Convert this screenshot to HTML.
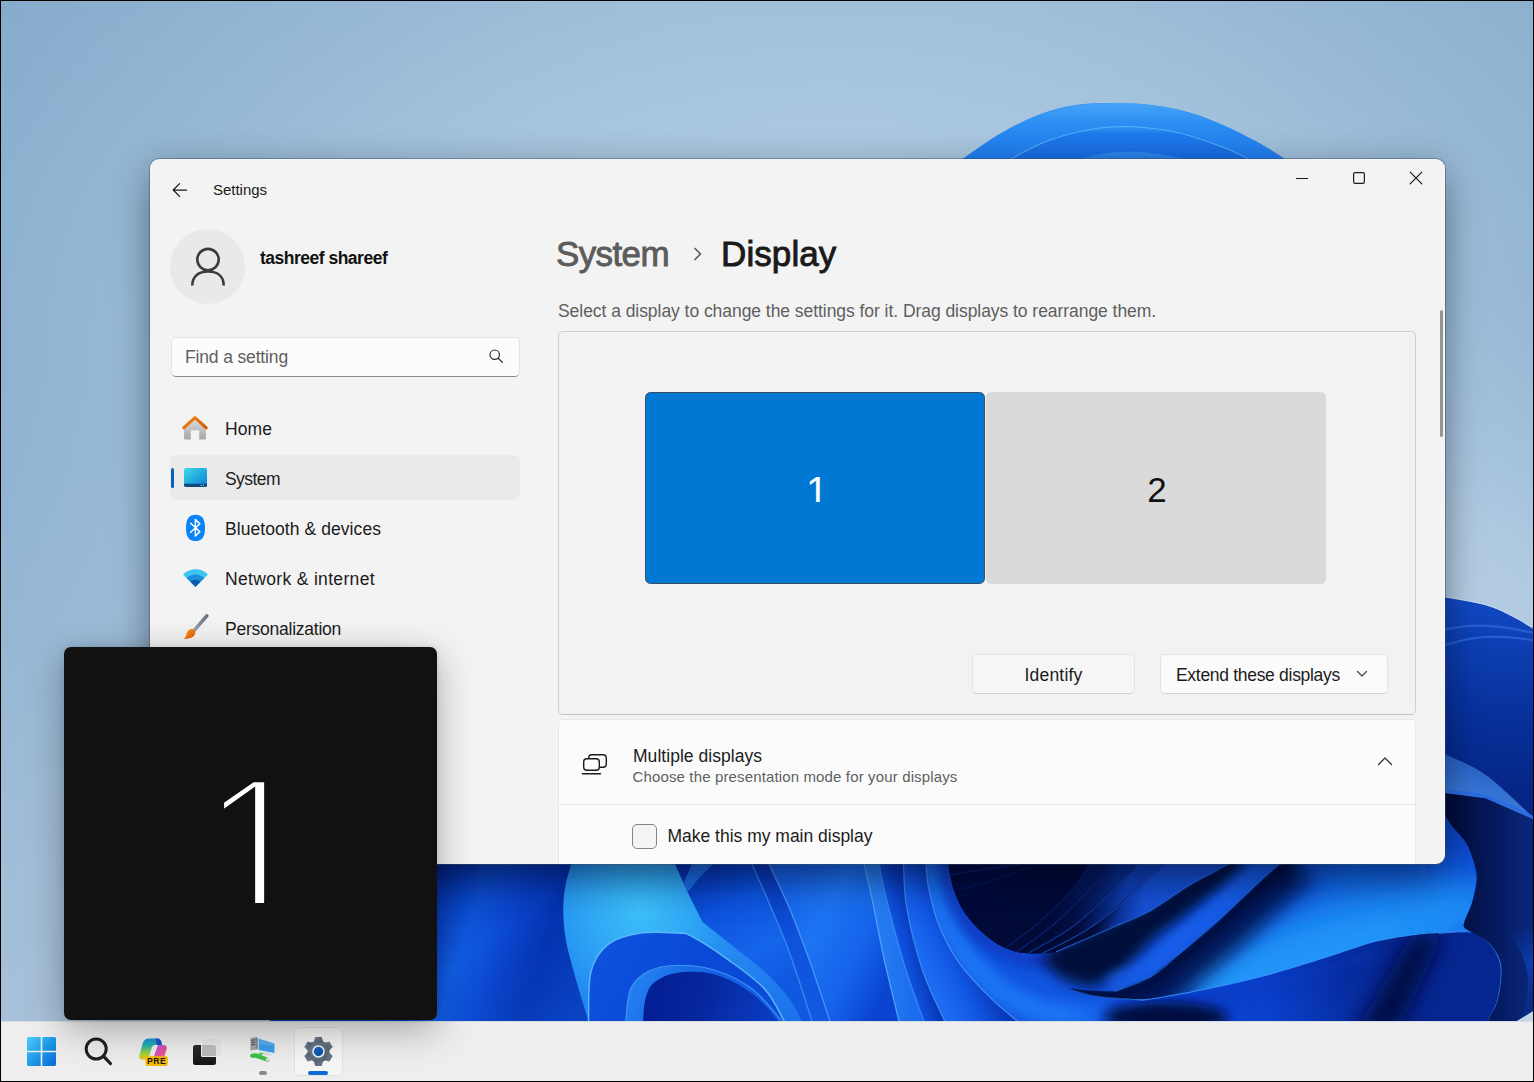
<!DOCTYPE html>
<html lang="en">
<head>
<meta charset="utf-8">
<title>Settings - Display</title>
<style>
*{box-sizing:border-box;margin:0;padding:0}
html,body{width:1534px;height:1082px;overflow:hidden;background:#8fb2d0}
body{font-family:"Liberation Sans","DejaVu Sans",sans-serif;color:#1b1b1b;position:relative}
#wall{position:absolute;left:0;top:0;width:1534px;height:1082px}
#frame{position:absolute;left:0;top:0;width:1534px;height:1082px;border:1px solid #000;z-index:50;pointer-events:none}
.abs{position:absolute}
/* ---------- window ---------- */
#win{position:absolute;left:150px;top:158.600px;width:1295px;height:705.400px;background:#f3f3f3;border-radius:9px;overflow:hidden;
 box-shadow:0 0 0 1px rgba(60,80,105,.45),0 16px 40px rgba(0,0,20,.26),0 0 30px 2px rgba(0,0,10,.10),0 26px 30px -12px rgba(0,0,25,.25)}
#win .t{position:absolute;white-space:nowrap;line-height:1}
/* ---------- taskbar ---------- */
#task{position:absolute;left:0;top:1021px;width:1534px;height:61px;background:#eeeeee;box-shadow:inset 0 1px 0 #d9dde3}
/* ---------- identify flyout ---------- */
#ident{position:absolute;left:64px;top:647px;width:373px;height:373px;background:#111111;border-radius:7px;
 box-shadow:0 10px 38px rgba(0,0,0,.30),0 0 6px rgba(0,0,0,.10)}
#ident span{position:absolute;left:0;width:373px;text-align:center;color:#fff;font-family:"Liberation Sans","DejaVu Sans",sans-serif;line-height:1;-webkit-text-stroke:8.700px #111111}
</style>
</head>
<body>
<!--WALL-START--><svg id="wall" width="1534" height="1082" viewBox="0 0 1534 1082"><defs><radialGradient id="bg" gradientUnits="userSpaceOnUse" cx="830" cy="420" r="1050"><stop offset="0" stop-color="#bdd6ea"/><stop offset="0.4" stop-color="#aac7e0"/><stop offset="0.78" stop-color="#8fb3d1"/><stop offset="1" stop-color="#80a7c7"/></radialGradient><linearGradient id="bgl" gradientUnits="userSpaceOnUse" x1="0" y1="0" x2="0" y2="1082"><stop offset="0" stop-color="#7fa6c6" stop-opacity="0.22"/><stop offset="0.35" stop-color="#9fbddb" stop-opacity="0"/><stop offset="0.75" stop-color="#b6cae0" stop-opacity="0.5"/><stop offset="1" stop-color="#bacde2" stop-opacity="0.72"/></linearGradient><radialGradient id="bgg" gradientUnits="userSpaceOnUse" cx="1420" cy="760" r="470"><stop offset="0" stop-color="#c6d9ea" stop-opacity="0.85"/><stop offset="0.5" stop-color="#bcd2e6" stop-opacity="0.6"/><stop offset="1" stop-color="#a9c6df" stop-opacity="0"/></radialGradient><linearGradient id="base" gradientUnits="userSpaceOnUse" x1="0" y1="100" x2="0" y2="1021"><stop offset="0" stop-color="#2f8df2"/><stop offset="0.25" stop-color="#0f4ed0"/><stop offset="0.6" stop-color="#0a3cb4"/><stop offset="1" stop-color="#0a40c4"/></linearGradient><linearGradient id="arc1" gradientUnits="userSpaceOnUse" x1="0" y1="103" x2="0" y2="165"><stop offset="0" stop-color="#45a4f7"/><stop offset="0.35" stop-color="#2b8cf2"/><stop offset="1" stop-color="#1e7aee"/></linearGradient><linearGradient id="arc2" gradientUnits="userSpaceOnUse" x1="0" y1="125" x2="0" y2="170"><stop offset="0" stop-color="#3a9cf5"/><stop offset="0.2" stop-color="#1f7bec"/><stop offset="1" stop-color="#1462de"/></linearGradient><linearGradient id="arc3" gradientUnits="userSpaceOnUse" x1="0" y1="150" x2="0" y2="175"><stop offset="0" stop-color="#2f8ff2"/><stop offset="1" stop-color="#0f58d8"/></linearGradient><filter id="bl3" filterUnits="userSpaceOnUse" x="300" y="700" width="1300" height="400"><feGaussianBlur stdDeviation="3"/></filter><filter id="bl6" filterUnits="userSpaceOnUse" x="300" y="700" width="1300" height="400"><feGaussianBlur stdDeviation="6"/></filter><filter id="bl10" filterUnits="userSpaceOnUse" x="300" y="700" width="1300" height="400"><feGaussianBlur stdDeviation="10"/></filter><filter id="bl16" filterUnits="userSpaceOnUse" x="300" y="700" width="1300" height="400"><feGaussianBlur stdDeviation="16"/></filter><linearGradient id="b1" gradientUnits="userSpaceOnUse" x1="437" y1="905" x2="575" y2="949"><stop offset="0" stop-color="#0a4cd4"/><stop offset="0.25" stop-color="#125fe8"/><stop offset="0.55" stop-color="#0a44cc"/><stop offset="0.8" stop-color="#0433b0"/><stop offset="1" stop-color="#0536b6"/></linearGradient><linearGradient id="b1d" gradientUnits="userSpaceOnUse" x1="450" y1="864" x2="560" y2="1021"><stop offset="0" stop-color="#021f8a" stop-opacity="0.6"/><stop offset="0.45" stop-color="#02279a" stop-opacity="0"/><stop offset="1" stop-color="#1d74f2" stop-opacity="0.2"/></linearGradient><linearGradient id="b2" gradientUnits="userSpaceOnUse" x1="690" y1="864" x2="760" y2="1000"><stop offset="0" stop-color="#0432ae"/><stop offset="0.35" stop-color="#0d52dc"/><stop offset="0.7" stop-color="#1565ea"/><stop offset="1" stop-color="#0f58e0"/></linearGradient><linearGradient id="p12" gradientUnits="userSpaceOnUse" x1="752" y1="864" x2="800" y2="1021"><stop offset="0" stop-color="#0837b8"/><stop offset="0.5" stop-color="#0f52dc"/><stop offset="1" stop-color="#1259e2"/></linearGradient><linearGradient id="p23" gradientUnits="userSpaceOnUse" x1="780" y1="900" x2="900" y2="960"><stop offset="0" stop-color="#1764ea"/><stop offset="0.35" stop-color="#1d74f2"/><stop offset="0.7" stop-color="#1563ea"/><stop offset="1" stop-color="#0a44d0"/></linearGradient><linearGradient id="p34" gradientUnits="userSpaceOnUse" x1="864" y1="0" x2="925" y2="0"><stop offset="0" stop-color="#2b82f4"/><stop offset="1" stop-color="#1868ec"/></linearGradient><linearGradient id="s1" gradientUnits="userSpaceOnUse" x1="880" y1="940" x2="915" y2="930"><stop offset="0" stop-color="#1a6af0"/><stop offset="0.5" stop-color="#0f52de"/><stop offset="1" stop-color="#0838ba"/></linearGradient><linearGradient id="s2" gradientUnits="userSpaceOnUse" x1="915" y1="950" x2="965" y2="925"><stop offset="0" stop-color="#1c6cf2"/><stop offset="0.45" stop-color="#1258e4"/><stop offset="1" stop-color="#0634b4"/></linearGradient><clipPath id="cPA"><path d="M925.4,848.3C925.5,850.9 925.4,857.5 926.0,864.3C926.5,871.1 926.8,879.3 928.9,889.3C931.0,899.4 933.8,912.5 938.7,924.5C943.6,936.6 949.8,949.6 958.2,961.7C966.7,973.8 979.7,987.1 989.5,996.9C999.3,1006.8 1009.1,1014.2 1016.9,1020.8C1024.7,1027.3 1033.2,1033.5 1036.5,1036.0L1000,1100L1560,1100L1560,820L947.5,848.3Z"/></clipPath><filter id="bl7" filterUnits="userSpaceOnUse" x="300" y="700" width="1300" height="400"><feGaussianBlur stdDeviation="7"/></filter><clipPath id="cPB"><path d="M1065.8,987.5C1070.7,989.0 1083.7,994.2 1095.1,996.3C1106.5,998.4 1125.1,999.4 1134.3,1000.0C1143.4,1000.6 1137.6,1001.7 1150.0,999.8C1162.4,998.0 1189.1,993.2 1208.7,989.1C1228.2,985.0 1247.8,980.6 1267.3,975.4C1286.9,970.2 1308.1,963.3 1326.0,957.8C1344.0,952.2 1360.2,945.9 1374.9,942.1C1389.6,938.4 1403.4,936.8 1414.0,935.3C1424.7,933.8 1429.4,933.7 1438.9,933.1C1448.4,932.5 1465.7,932.0 1471.1,931.8L1471.0,932.0L1464.0,927.0L1465.0,920.0L1472.0,903.0L1476.7,880.0L1474.0,863.0L1466.3,843.5L1453.4,828.0L1445.0,816.0L1438.0,806.0L1425.0,795.0L1300,795L1290.8,854.1L1279.1,864.3L1257.6,883.5L1218.5,920.6L1179.3,953.9L1150.0,977.3L1114.7,991.4L1085.4,990.6L1065.8,987.5Z"/></clipPath><linearGradient id="pb" gradientUnits="userSpaceOnUse" x1="1200" y1="900" x2="1420" y2="1010"><stop offset="0" stop-color="#0a40c8"/><stop offset="0.5" stop-color="#1266e6"/><stop offset="1" stop-color="#0f55dc"/></linearGradient><linearGradient id="e1s" gradientUnits="userSpaceOnUse" x1="1060" y1="0" x2="1160" y2="0"><stop offset="0" stop-color="#3a92f7" stop-opacity="0"/><stop offset="1" stop-color="#3a92f7" stop-opacity="1"/></linearGradient><clipPath id="cUN"><path d="M1065.8,987.5C1070.7,989.0 1083.7,994.2 1095.1,996.3C1106.5,998.4 1125.1,999.4 1134.3,1000.0C1143.4,1000.6 1137.6,1001.7 1150.0,999.8C1162.4,998.0 1189.1,993.2 1208.7,989.1C1228.2,985.0 1247.8,980.6 1267.3,975.4C1286.9,970.2 1308.1,963.3 1326.0,957.8C1344.0,952.2 1360.2,945.9 1374.9,942.1C1389.6,938.4 1403.4,936.8 1414.0,935.3C1424.7,933.8 1429.4,933.7 1438.9,933.1C1448.4,932.5 1462.8,930.4 1471.1,931.8C1479.3,933.3 1483.5,936.4 1488.4,941.7C1493.4,947.1 1499.1,954.5 1500.8,964.0C1502.4,973.5 1498.7,992.9 1498.3,998.7L1500,1100L1000,1100Z"/></clipPath><linearGradient id="mUNg" gradientUnits="userSpaceOnUse" x1="1066" y1="0" x2="1120" y2="0"><stop offset="0" stop-color="#fff" stop-opacity="0"/><stop offset="1" stop-color="#fff" stop-opacity="1"/></linearGradient><mask id="mUN" maskUnits="userSpaceOnUse" x="900" y="800" width="700" height="300"><rect x="900" y="800" width="700" height="300" fill="url(#mUNg)"/></mask><linearGradient id="und" gradientUnits="userSpaceOnUse" x1="1060" y1="1030" x2="1400" y2="960"><stop offset="0" stop-color="#1660ea"/><stop offset="0.3" stop-color="#0a44d4"/><stop offset="0.6" stop-color="#0a40cc"/><stop offset="0.85" stop-color="#062c9e"/><stop offset="1" stop-color="#052690"/></linearGradient><linearGradient id="cav" gradientUnits="userSpaceOnUse" x1="950" y1="864" x2="1200" y2="960"><stop offset="0" stop-color="#040c44"/><stop offset="0.5" stop-color="#030a3a"/><stop offset="1" stop-color="#02082e"/></linearGradient><clipPath id="cCV"><path d="M947.5,848.3C947.6,850.9 947.6,858.1 948.5,864.3C949.3,870.5 950.1,878.0 952.4,885.4C954.6,892.9 957.9,901.7 962.1,908.9C966.4,916.1 971.9,922.6 977.8,928.5C983.7,934.3 990.8,940.2 997.3,944.1C1003.9,948.0 1010.4,950.4 1016.9,951.9C1023.4,953.5 1033.2,953.2 1036.5,953.5L1056.0,951.9L1114.7,926.5L1150.0,910.9L1189.1,885.4L1228.2,864.3L1240.0,856.1L900,800Z"/></clipPath><linearGradient id="rg0" gradientUnits="userSpaceOnUse" x1="1036.4639155094856" y1="924.5413651476629" x2="1064.0219049481714" y2="934.5855662037942"><stop offset="0" stop-color="#020a36"/><stop offset="0.55" stop-color="#04144f"/><stop offset="1" stop-color="#07206f"/></linearGradient><linearGradient id="rg1" gradientUnits="userSpaceOnUse" x1="1056.0219049481714" y1="922.5855662037942" x2="1083.579894386857" y2="936.5413651476629"><stop offset="0" stop-color="#020a36"/><stop offset="0.55" stop-color="#07206f"/><stop offset="1" stop-color="#0b3096"/></linearGradient><linearGradient id="rg2" gradientUnits="userSpaceOnUse" x1="1075.579894386857" y1="924.5413651476629" x2="1103.1378838255428" y2="936.5413651476629"><stop offset="0" stop-color="#020a36"/><stop offset="0.55" stop-color="#0b3096"/><stop offset="1" stop-color="#1142bc"/></linearGradient><linearGradient id="rg3" gradientUnits="userSpaceOnUse" x1="1095.1378838255428" y1="924.5413651476629" x2="1122.6958732642283" y2="938.4971640915314"><stop offset="0" stop-color="#020a36"/><stop offset="0.55" stop-color="#1142bc"/><stop offset="1" stop-color="#1650d4"/></linearGradient><radialGradient id="rfade" gradientUnits="userSpaceOnUse" cx="1028.6407197340113" cy="951.9225503618228" r="125"><stop offset="0" stop-color="#020a36" stop-opacity="0.95"/><stop offset="0.5" stop-color="#020a36" stop-opacity="0.6"/><stop offset="1" stop-color="#020a36" stop-opacity="0"/></radialGradient><linearGradient id="curl" gradientUnits="userSpaceOnUse" x1="1440" y1="940" x2="1500" y2="1021"><stop offset="0" stop-color="#0a36aa"/><stop offset="1" stop-color="#0d44c4"/></linearGradient><radialGradient id="lp" gradientUnits="userSpaceOnUse" cx="640" cy="912" r="160"><stop offset="0" stop-color="#3cc0f8"/><stop offset="0.3" stop-color="#30a8f5"/><stop offset="0.65" stop-color="#2088f0"/><stop offset="1" stop-color="#176ce8"/></radialGradient><linearGradient id="rim" gradientUnits="userSpaceOnUse" x1="700" y1="930" x2="800" y2="1021"><stop offset="0" stop-color="#2a90f2" stop-opacity="0"/><stop offset="0.4" stop-color="#2484f0" stop-opacity="0.9"/><stop offset="1" stop-color="#1c70ec" stop-opacity="1"/></linearGradient><linearGradient id="inf" gradientUnits="userSpaceOnUse" x1="600" y1="930" x2="760" y2="1021"><stop offset="0" stop-color="#0d52de"/><stop offset="0.6" stop-color="#0a48d6"/><stop offset="1" stop-color="#0b4cd8"/></linearGradient><linearGradient id="lip" gradientUnits="userSpaceOnUse" x1="630" y1="960" x2="700" y2="1000"><stop offset="0" stop-color="#2686f2"/><stop offset="1" stop-color="#1460e4"/></linearGradient><linearGradient id="ind" gradientUnits="userSpaceOnUse" x1="640" y1="980" x2="770" y2="1010"><stop offset="0" stop-color="#041c92"/><stop offset="0.5" stop-color="#06279e"/><stop offset="1" stop-color="#0a3cc0"/></linearGradient><linearGradient id="tr" gradientUnits="userSpaceOnUse" x1="1450" y1="0" x2="1540" y2="0"><stop offset="0" stop-color="#030d3a"/><stop offset="0.5" stop-color="#051a5e"/><stop offset="1" stop-color="#0a2a80"/></linearGradient><linearGradient id="trs" gradientUnits="userSpaceOnUse" x1="1490" y1="940" x2="1534" y2="1010"><stop offset="0" stop-color="#0a2f9a" stop-opacity="0"/><stop offset="0.5" stop-color="#0d3fb4" stop-opacity="0.9"/><stop offset="1" stop-color="#0a2f9a" stop-opacity="0.3"/></linearGradient><linearGradient id="tl" gradientUnits="userSpaceOnUse" x1="1445" y1="810" x2="1445" y2="880"><stop offset="0" stop-color="#0a3cb4" stop-opacity="1"/><stop offset="0.55" stop-color="#0d48c8" stop-opacity="0.9"/><stop offset="1" stop-color="#0f52d6" stop-opacity="0"/></linearGradient><linearGradient id="r1" gradientUnits="userSpaceOnUse" x1="1445" y1="600" x2="1445" y2="800"><stop offset="0" stop-color="#1149c2"/><stop offset="0.15" stop-color="#0e42b8"/><stop offset="0.6" stop-color="#08309a"/><stop offset="1" stop-color="#062584"/></linearGradient><linearGradient id="r2" gradientUnits="userSpaceOnUse" x1="1460" y1="760" x2="1450" y2="800"><stop offset="0" stop-color="#2a62c4"/><stop offset="0.6" stop-color="#3573d2"/><stop offset="1" stop-color="#3a7ad8"/></linearGradient></defs><rect width="1534" height="1082" fill="url(#bg)"/>
<rect width="1534" height="1082" fill="url(#bgl)"/>
<rect width="1534" height="1082" fill="url(#bgg)"/>
<path d="M964.0,158.0C971.7,153.0 994.0,136.3 1010.0,128.0C1026.0,119.7 1042.5,112.2 1060.0,108.0C1077.5,103.8 1095.0,102.7 1115.0,103.0C1135.0,103.3 1159.2,105.0 1180.0,110.0C1200.8,115.0 1220.0,123.0 1240.0,133.0C1260.0,143.0 1276.7,152.2 1300.0,170.0C1323.3,187.8 1356.7,198.3 1380.0,240.0C1403.3,281.7 1429.2,359.3 1440.0,420.0C1450.8,480.7 1437.3,572.0 1445.0,604.0C1452.7,636.0 1474.8,608.8 1486.0,612.0C1497.2,615.2 1499.7,616.7 1512.0,623.0C1524.3,629.3 1545.3,620.5 1560.0,650.0C1574.7,679.5 1604.3,741.7 1600.0,800.0C1595.7,858.3 1550.7,961.7 1534.0,1000.0C1517.3,1038.3 1555.7,1013.3 1500.0,1030.0C1444.3,1046.7 1350.0,1088.3 1200.0,1100.0C1050.0,1111.7 750.0,1110.0 600.0,1100.0C450.0,1090.0 358.3,1073.3 300.0,1040.0C241.7,1006.7 233.3,990.0 250.0,900.0C266.7,810.0 325.0,608.3 400.0,500.0C475.0,391.7 606.0,307.0 700.0,250.0C794.0,193.0 920.0,173.3 964.0,158.0Z" fill="url(#base)"/>
<path d="M955.0,165.0C962.5,159.8 983.3,143.2 1000.0,134.0C1016.7,124.8 1035.8,115.2 1055.0,110.0C1074.2,104.8 1095.0,103.2 1115.0,103.0C1135.0,102.8 1155.0,104.3 1175.0,109.0C1195.0,113.7 1215.8,121.8 1235.0,131.0C1254.2,140.2 1280.8,158.5 1290.0,164.0L1290,300L955,300Z" fill="url(#arc1)"/>
<path d="M1000.0,165.0C1008.3,160.8 1031.7,146.3 1050.0,140.0C1068.3,133.7 1090.0,128.5 1110.0,127.0C1130.0,125.5 1150.8,127.5 1170.0,131.0C1189.2,134.5 1209.7,142.2 1225.0,148.0C1240.3,153.8 1255.8,163.0 1262.0,166.0L1262,300L1000,300Z" fill="url(#arc2)"/>
<path d="M1000.0,165.0C1008.3,160.8 1031.7,146.3 1050.0,140.0C1068.3,133.7 1090.0,128.5 1110.0,127.0C1130.0,125.5 1150.8,127.5 1170.0,131.0C1189.2,134.5 1209.7,142.2 1225.0,148.0C1240.3,153.8 1255.8,163.0 1262.0,166.0" fill="none" stroke="#5cb8fa" stroke-width="1.2" opacity="0.8"/>
<path d="M1060.0,166.0C1066.7,164.0 1086.7,156.3 1100.0,154.0C1113.3,151.7 1126.7,151.3 1140.0,152.0C1153.3,152.7 1169.2,155.5 1180.0,158.0C1190.8,160.5 1200.8,165.5 1205.0,167.0L1205,300L1060,300Z" fill="url(#arc3)"/>
<path d="M380,840L1560,840L1560,1050L380,1050Z" fill="#0c4cd8"/>
<path d="M380,840L700,840L700,1040L380,1040Z" fill="url(#b1)"/>
<path d="M380,840L700,840L700,1040L380,1040Z" fill="url(#b1d)"/>
<path d="M660,840L900,840L900,1050L660,1050Z" fill="url(#b2)"/>
<path d="M714.9,862.5C712.4,865.0 704.5,872.4 700.0,877.3C695.5,882.3 689.7,889.7 687.6,892.2L683.9,882.3C685.3,879.0 691.1,865.8 692.6,862.5Z" fill="#1c6de6"/>
<path d="M745.0,845.0C746.2,848.2 747.8,854.0 752.0,864.0C756.2,874.0 763.7,890.0 770.0,905.0C776.3,920.0 783.0,934.7 790.0,954.0C797.0,973.3 807.0,1005.8 812.0,1021.0C817.0,1036.2 818.7,1041.0 820.0,1045.0L838.0,1045.0L830.0,1021.0L810.0,962.0L790.0,909.5L769.0,864.0L761.0,845.0Z" fill="url(#p12)"/>
<path d="M745.0,845.0C746.2,848.2 747.8,854.0 752.0,864.0C756.2,874.0 763.7,890.0 770.0,905.0C776.3,920.0 783.0,934.7 790.0,954.0C797.0,973.3 807.0,1005.8 812.0,1021.0C817.0,1036.2 818.7,1041.0 820.0,1045.0" fill="none" stroke="#3f95f6" stroke-width="1.3" opacity="0.8"/>
<path d="M761.0,845.0C762.3,848.2 764.2,853.2 769.0,864.0C773.8,874.8 783.2,893.2 790.0,909.5C796.8,925.8 803.3,943.4 810.0,962.0C816.7,980.6 825.3,1007.2 830.0,1021.0C834.7,1034.8 836.7,1041.0 838.0,1045.0L903.9,1040.8L899.0,1021.0L884.1,959.1L871.7,897.2L864.3,864.5L863.1,847.6Z" fill="url(#p23)"/>
<path d="M761.0,845.0C762.3,848.2 764.2,853.2 769.0,864.0C773.8,874.8 783.2,893.2 790.0,909.5C796.8,925.8 803.3,943.4 810.0,962.0C816.7,980.6 825.3,1007.2 830.0,1021.0C834.7,1034.8 836.7,1041.0 838.0,1045.0" fill="none" stroke="#4a9cf8" stroke-width="1.3" opacity="0.9"/>
<path d="M863.1,847.6C863.3,850.4 862.9,856.2 864.3,864.5C865.8,872.7 868.4,881.4 871.7,897.2C875.0,912.9 879.6,938.4 884.1,959.1C888.7,979.7 895.7,1007.4 899.0,1021.0C902.3,1034.6 903.1,1037.5 903.9,1040.8L930.0,1040.8L923.8,1021.0L906.4,971.5L889.1,909.5L879.2,864.5L877.9,847.6Z" fill="url(#p34)"/>
<path d="M863.1,847.6C863.3,850.4 862.9,856.2 864.3,864.5C865.8,872.7 868.4,881.4 871.7,897.2C875.0,912.9 879.6,938.4 884.1,959.1C888.7,979.7 895.7,1007.4 899.0,1021.0C902.3,1034.6 903.1,1037.5 903.9,1040.8" fill="none" stroke="#55a6fa" stroke-width="1.3" opacity="0.9"/>
<path d="M877.9,847.6C878.1,850.4 877.3,854.1 879.2,864.5C881.0,874.8 884.5,891.7 889.1,909.5C893.6,927.4 900.6,952.9 906.4,971.5C912.2,990.0 919.8,1009.5 923.8,1021.0C927.7,1032.6 928.9,1037.5 930.0,1040.8L954.3,1039.9L944.5,1020.8L925.0,977.3L913.2,938.2L905.4,899.1L903.5,864.3L902.5,848.3Z" fill="url(#s1)"/>
<path d="M877.9,847.6C878.1,850.4 877.3,854.1 879.2,864.5C881.0,874.8 884.5,891.7 889.1,909.5C893.6,927.4 900.6,952.9 906.4,971.5C912.2,990.0 919.8,1009.5 923.8,1021.0C927.7,1032.6 928.9,1037.5 930.0,1040.8" fill="none" stroke="#3c8cf4" stroke-width="1.2" opacity="0.9"/>
<path d="M902.5,848.3C902.7,850.9 903.0,855.8 903.5,864.3C904.0,872.8 903.8,886.8 905.4,899.1C907.1,911.4 910.0,925.2 913.2,938.2C916.5,951.3 919.8,963.6 925.0,977.3C930.2,991.1 939.7,1010.3 944.5,1020.8C949.4,1031.2 952.7,1036.7 954.3,1039.9L1036.5,1036.0L1016.9,1020.8L989.5,996.9L958.2,961.7L938.7,924.5L928.9,889.3L926.0,864.3L925.4,848.3Z" fill="url(#s2)"/>
<path d="M902.5,848.3C902.7,850.9 903.0,855.8 903.5,864.3C904.0,872.8 903.8,886.8 905.4,899.1C907.1,911.4 910.0,925.2 913.2,938.2C916.5,951.3 919.8,963.6 925.0,977.3C930.2,991.1 939.7,1010.3 944.5,1020.8C949.4,1031.2 952.7,1036.7 954.3,1039.9" fill="none" stroke="#3f8ef5" stroke-width="1.2" opacity="0.9"/>
<path d="M925.4,848.3C925.5,850.9 925.4,857.5 926.0,864.3C926.5,871.1 926.8,879.3 928.9,889.3C931.0,899.4 933.8,912.5 938.7,924.5C943.6,936.6 949.8,949.6 958.2,961.7C966.7,973.8 979.7,987.1 989.5,996.9C999.3,1006.8 1009.1,1014.2 1016.9,1020.8C1024.7,1027.3 1033.2,1033.5 1036.5,1036.0L1000,1100L1560,1100L1560,820L947.5,848.3Z" fill="#1156e0"/>
<g clip-path="url(#cPA)">
<path d="M931.2,852.2C931.8,856.7 932.0,868.5 934.4,879.6C936.8,890.6 939.9,905.6 945.5,918.7C951.1,931.7 958.4,945.4 968.0,957.8C977.6,970.2 988.5,983.5 1003.2,993.0C1017.9,1002.4 1035.8,1010.9 1056.0,1014.5C1076.2,1018.1 1113.1,1014.5 1124.5,1014.5" fill="none" stroke="#1f74f4" stroke-width="24" filter="url(#bl6)" opacity="0.95"/>
<path d="M945.5,852.2C946.0,857.4 946.0,873.4 948.5,883.5C950.9,893.6 955.3,904.3 960.2,912.8C965.1,921.3 970.9,928.1 977.8,934.3C984.6,940.5 991.5,945.4 1001.3,950.0C1011.0,954.5 1025.4,959.7 1036.5,961.7C1047.5,963.7 1062.5,961.7 1067.8,961.7" fill="none" stroke="#0a38bc" stroke-width="14" filter="url(#bl6)" opacity="0.9"/>
<path d="M1052.0,945.9C1061.8,941.7 1095.0,927.3 1110.7,920.5C1126.4,913.7 1133.6,911.7 1146.0,904.9C1158.4,898.0 1172.1,887.2 1185.1,879.4C1198.2,871.7 1215.8,863.2 1224.2,858.3C1232.7,853.4 1234.0,851.5 1236.0,850.1L1247.8,860.0L1232.1,877.6L1183.2,916.7L1153.8,938.2L1120.6,974.4L1091.2,988.1L1061.9,979.3L1040.4,957.8Z" fill="#020a36" filter="url(#bl7)" opacity="0.97"/>
<path d="M1273.1,855.3C1269.5,858.5 1261.7,865.1 1251.6,874.5C1241.5,883.9 1225.5,899.9 1212.5,911.6C1199.4,923.4 1184.7,935.4 1173.3,944.9C1161.9,954.3 1154.8,962.1 1144.0,968.3C1133.2,974.6 1114.6,980.1 1108.7,982.4" fill="none" stroke="#1a62ec" stroke-width="14" filter="url(#bl6)" opacity="0.8"/>
</g>
<path d="M925.4,848.3C925.5,850.9 925.4,857.5 926.0,864.3C926.5,871.1 926.8,879.3 928.9,889.3C931.0,899.4 933.8,912.5 938.7,924.5C943.6,936.6 949.8,949.6 958.2,961.7C966.7,973.8 979.7,987.1 989.5,996.9C999.3,1006.8 1009.1,1014.2 1016.9,1020.8C1024.7,1027.3 1033.2,1033.5 1036.5,1036.0" fill="none" stroke="#4794f7" stroke-width="1.3" opacity="0.85"/>
<path d="M1065.8,987.5C1070.7,989.0 1083.7,994.2 1095.1,996.3C1106.5,998.4 1125.1,999.4 1134.3,1000.0C1143.4,1000.6 1137.6,1001.7 1150.0,999.8C1162.4,998.0 1189.1,993.2 1208.7,989.1C1228.2,985.0 1247.8,980.6 1267.3,975.4C1286.9,970.2 1308.1,963.3 1326.0,957.8C1344.0,952.2 1360.2,945.9 1374.9,942.1C1389.6,938.4 1403.4,936.8 1414.0,935.3C1424.7,933.8 1429.4,933.7 1438.9,933.1C1448.4,932.5 1465.7,932.0 1471.1,931.8L1471.0,932.0L1464.0,927.0L1465.0,920.0L1472.0,903.0L1476.7,880.0L1474.0,863.0L1466.3,843.5L1453.4,828.0L1445.0,816.0L1438.0,806.0L1425.0,795.0L1300,795L1290.8,854.1L1279.1,864.3L1257.6,883.5L1218.5,920.6L1179.3,953.9L1150.0,977.3L1114.7,991.4L1085.4,990.6L1065.8,987.5Z" fill="url(#pb)"/>
<g clip-path="url(#cPB)">
<ellipse cx="1340" cy="946" rx="165" ry="42" transform="rotate(-17 1340 946)" fill="#1e8ef5" filter="url(#bl16)"/>
<ellipse cx="1300" cy="962" rx="110" ry="18" transform="rotate(-17 1300 962)" fill="#2294f7" filter="url(#bl10)"/>
<path d="M1300.8,868.1C1298.9,869.8 1294.6,873.4 1289.1,878.3C1283.5,883.2 1277.7,888.1 1267.6,897.5C1257.5,906.9 1241.5,922.9 1228.5,934.6C1215.4,946.4 1200.7,958.4 1189.3,967.9C1177.9,977.3 1170.8,985.1 1160.0,991.3C1149.2,997.6 1135.5,1003.2 1124.7,1005.4C1113.9,1007.6 1103.5,1005.3 1095.4,1004.6C1087.2,1004.0 1079.1,1002.0 1075.8,1001.5" fill="none" stroke="#020c40" stroke-width="30" filter="url(#bl10)" opacity="0.9"/>
<path d="M1293.8,858.1C1291.9,859.8 1287.6,863.4 1282.1,868.3C1276.5,873.2 1270.7,878.1 1260.6,887.5C1250.5,896.9 1234.5,912.9 1221.5,924.6C1208.4,936.4 1193.7,948.4 1182.3,957.9C1170.9,967.3 1163.8,975.1 1153.0,981.3C1142.2,987.6 1128.5,993.2 1117.7,995.4C1106.9,997.6 1096.5,995.3 1088.4,994.6C1080.2,994.0 1072.1,992.0 1068.8,991.5" fill="none" stroke="#020c40" stroke-width="14" filter="url(#bl3)" opacity="0.95"/>
</g>
<path d="M1065.8,987.5C1070.7,989.0 1083.7,994.2 1095.1,996.3C1106.5,998.4 1125.1,999.4 1134.3,1000.0C1143.4,1000.6 1147.4,999.9 1150.0,999.8" fill="none" stroke="url(#e1s)" stroke-width="2.2" opacity="0.9"/>
<path d="M1150.0,999.8C1159.8,998.0 1189.1,993.2 1208.7,989.1C1228.2,985.0 1247.8,980.6 1267.3,975.4C1286.9,970.2 1308.1,963.3 1326.0,957.8C1344.0,952.2 1360.2,945.9 1374.9,942.1C1389.6,938.4 1403.4,936.8 1414.0,935.3C1424.7,933.8 1429.4,933.7 1438.9,933.1C1448.4,932.5 1462.8,930.4 1471.1,931.8C1479.3,933.3 1485.5,940.1 1488.4,941.7" fill="none" stroke="#3a92f7" stroke-width="2" opacity="0.9"/>
<path d="M1279.1,864.3C1275.5,867.5 1267.7,874.1 1257.6,883.5C1247.5,892.9 1231.5,908.9 1218.5,920.6C1205.4,932.4 1190.7,944.4 1179.3,953.9C1167.9,963.3 1160.8,971.1 1150.0,977.3C1139.2,983.6 1120.6,989.1 1114.7,991.4" fill="none" stroke="#2f80f2" stroke-width="1.2" opacity="0.55"/>
<path d="M1065.8,987.5C1070.7,989.0 1083.7,994.2 1095.1,996.3C1106.5,998.4 1125.1,999.4 1134.3,1000.0C1143.4,1000.6 1137.6,1001.7 1150.0,999.8C1162.4,998.0 1189.1,993.2 1208.7,989.1C1228.2,985.0 1247.8,980.6 1267.3,975.4C1286.9,970.2 1308.1,963.3 1326.0,957.8C1344.0,952.2 1360.2,945.9 1374.9,942.1C1389.6,938.4 1403.4,936.8 1414.0,935.3C1424.7,933.8 1429.4,933.7 1438.9,933.1C1448.4,932.5 1462.8,930.4 1471.1,931.8C1479.3,933.3 1483.5,936.4 1488.4,941.7C1493.4,947.1 1499.1,954.5 1500.8,964.0C1502.4,973.5 1498.7,992.9 1498.3,998.7L1500,1100L1000,1100Z" fill="url(#und)" mask="url(#mUN)"/>
<g clip-path="url(#cUN)">
<path d="M1412.1,934.3 L1443.4,934.3 L1396.4,1036.0 L1353.4,1036.0 Z" fill="#020f46" filter="url(#bl10)"/>
<path d="M1150.0,1009.6C1159.8,1007.8 1189.1,1002.8 1208.7,998.9C1228.2,995.0 1247.8,991.0 1267.3,986.1C1286.9,981.3 1308.1,975.1 1326.0,969.5C1344.0,964.0 1366.8,955.7 1374.9,952.9" fill="none" stroke="#0836b8" stroke-width="10" filter="url(#bl6)" opacity="0.5"/>
<ellipse cx="1166" cy="1017" rx="62" ry="15" fill="#020d40" filter="url(#bl6)"/>
</g>
<path d="M947.5,848.3C947.6,850.9 947.6,858.1 948.5,864.3C949.3,870.5 950.1,878.0 952.4,885.4C954.6,892.9 957.9,901.7 962.1,908.9C966.4,916.1 971.9,922.6 977.8,928.5C983.7,934.3 990.8,940.2 997.3,944.1C1003.9,948.0 1010.4,950.4 1016.9,951.9C1023.4,953.5 1033.2,953.2 1036.5,953.5L1056.0,951.9L1114.7,926.5L1150.0,910.9L1189.1,885.4L1228.2,864.3L1240.0,856.1L900,800Z" fill="url(#cav)"/>
<g clip-path="url(#cCV)">
<path d="M1005.2,948.0C1010.4,944.1 1024.7,935.0 1036.5,924.5C1048.2,914.1 1066.5,896.5 1075.6,885.4C1084.7,874.3 1088.6,862.6 1091.2,858.0L1114.7,858.0L1095.1,883.5L1056.0,922.6L1016.9,951.5Z" fill="url(#rg0)"/>
<path d="M1016.9,951.5C1023.4,946.7 1043.0,933.9 1056.0,922.6C1069.1,911.2 1085.4,894.2 1095.1,883.5C1104.9,872.7 1111.4,862.3 1114.7,858.0L1144.0,858.0L1124.5,879.6L1075.6,924.5L1028.6,952.9Z" fill="url(#rg1)"/>
<path d="M1028.6,952.9C1036.5,948.2 1059.6,936.8 1075.6,924.5C1091.6,912.3 1113.1,890.6 1124.5,879.6C1135.9,868.5 1140.8,861.6 1144.0,858.0L1171.4,858.0L1153.8,875.6L1095.1,924.5L1042.3,953.5Z" fill="url(#rg2)"/>
<path d="M1042.3,953.5C1051.1,948.7 1076.6,937.5 1095.1,924.5C1113.7,911.6 1141.1,886.7 1153.8,875.6C1166.5,864.6 1168.5,861.0 1171.4,858.0L1240.0,856.1L1228.2,864.3L1189.1,885.4L1150.0,910.9L1114.7,926.5L1056.0,951.9Z" fill="url(#rg3)"/>
<path d="M900,820L1300,820L1300,1000L900,1000Z" fill="url(#rfade)"/>
<path d="M1005.2,948.0C1010.4,944.1 1024.7,935.0 1036.5,924.5C1048.2,914.1 1066.5,896.5 1075.6,885.4C1084.7,874.3 1088.6,862.6 1091.2,858.0" fill="none" stroke="#0a2a8a" stroke-width="1.1" opacity="0.6"/>
<path d="M1016.9,951.5C1023.4,946.7 1043.0,933.9 1056.0,922.6C1069.1,911.2 1085.4,894.2 1095.1,883.5C1104.9,872.7 1111.4,862.3 1114.7,858.0" fill="none" stroke="#0f3aae" stroke-width="1.1" opacity="0.6"/>
<path d="M1028.6,952.9C1036.5,948.2 1059.6,936.8 1075.6,924.5C1091.6,912.3 1113.1,890.6 1124.5,879.6C1135.9,868.5 1140.8,861.6 1144.0,858.0" fill="none" stroke="#1850d4" stroke-width="1.1" opacity="0.6"/>
<path d="M1042.3,953.5C1051.1,948.7 1076.6,937.5 1095.1,924.5C1113.7,911.6 1141.1,886.7 1153.8,875.6C1166.5,864.6 1168.5,861.0 1171.4,858.0" fill="none" stroke="#2266e8" stroke-width="1.1" opacity="0.6"/>
<path d="M950.4,874.7C955.6,873.9 970.0,871.5 981.7,869.8C993.4,868.1 1014.3,865.2 1020.8,864.3" fill="none" stroke="#0a2270" stroke-width="2" opacity="0.7"/>
<path d="M958.2,889.3C963.4,888.0 977.8,885.1 989.5,881.5C1001.3,877.9 1022.1,870.1 1028.6,867.8" fill="none" stroke="#081c60" stroke-width="2" opacity="0.6"/>
</g>
<path d="M1056.0,951.9C1065.8,947.7 1099.0,933.3 1114.7,926.5C1130.4,919.7 1137.6,917.7 1150.0,910.9C1162.4,904.0 1176.1,893.2 1189.1,885.4C1202.2,877.7 1219.8,869.2 1228.2,864.3C1236.7,859.4 1238.0,857.5 1240.0,856.1" fill="none" stroke="#2a74ee" stroke-width="1.2" opacity="0.7"/>
<path d="M1438.9,933.1C1444.2,932.9 1462.8,930.4 1471.1,931.8C1479.3,933.3 1483.5,936.4 1488.4,941.7C1493.4,947.1 1499.1,954.5 1500.8,964.0C1502.4,973.5 1500.4,989.2 1498.3,998.7C1496.3,1008.2 1491.3,1013.6 1488.4,1021.0C1485.5,1028.4 1482.2,1039.6 1481.0,1043.3" fill="none" stroke="#2f7ff0" stroke-width="1.6" opacity="0.9"/>
<path d="M583.6,840.2C581.5,844.2 574.5,855.0 571.2,864.5C567.9,874.0 564.8,885.5 563.8,897.2C562.7,908.8 563.3,921.9 565.0,934.3C566.7,946.7 569.7,957.0 573.7,971.5C577.6,985.9 584.4,1008.2 588.5,1021.0C592.7,1033.8 596.8,1043.7 598.4,1048.3L811.5,1048.3L801.6,1021.0L789.2,998.7L764.4,971.5L727.3,941.7L702.5,921.9L687.6,892.2L675.2,864.5L674.0,845.1Z" fill="url(#lp)"/>
<path d="M702.5,921.9C706.6,925.2 716.9,933.5 727.3,941.7C737.6,950.0 754.1,962.0 764.4,971.5C774.7,981.0 783.0,990.5 789.2,998.7C795.4,1007.0 797.8,1012.8 801.6,1021.0C805.3,1029.3 809.8,1043.7 811.5,1048.3L794.1,1048.3L784.2,1021.0L764.4,988.8L727.3,959.1L692.6,936.8L677.7,933.1Z" fill="url(#rim)"/>
<path d="M591.0,1048.3C590.6,1043.7 588.5,1033.8 588.5,1021.0C588.5,1008.2 587.7,984.3 591.0,971.5C594.3,958.7 600.1,950.6 608.4,944.2C616.6,937.8 629.0,934.9 640.6,933.1C652.1,931.2 669.0,932.5 677.7,933.1C686.4,933.7 684.3,932.5 692.6,936.8C700.8,941.1 715.3,950.4 727.3,959.1C739.2,967.8 754.9,978.5 764.4,988.8C773.9,999.1 779.3,1011.1 784.2,1021.0C789.2,1030.9 792.5,1043.7 794.1,1048.3Z" fill="url(#inf)"/>
<path d="M588.5,1021.0C588.9,1012.8 587.7,984.3 591.0,971.5C594.3,958.7 600.1,950.6 608.4,944.2C616.6,937.8 629.0,934.9 640.6,933.1C652.1,931.2 669.0,932.5 677.7,933.1C686.4,933.7 684.3,932.5 692.6,936.8C700.8,941.1 715.3,950.4 727.3,959.1C739.2,967.8 754.9,978.5 764.4,988.8C773.9,999.1 780.9,1015.6 784.2,1021.0" fill="none" stroke="#62c0fb" stroke-width="1.5" opacity="0.9"/>
<path d="M623.2,1048.3C623.6,1043.7 624.5,1030.9 625.7,1021.0C626.9,1011.1 626.9,997.1 630.6,988.8C634.4,980.6 640.1,975.4 648.0,971.5C655.8,967.5 666.6,965.5 677.7,965.3C688.9,965.1 702.5,966.3 714.9,970.2C727.3,974.2 740.9,980.3 752.0,988.8C763.2,997.3 775.1,1011.1 781.7,1021.0C788.4,1030.9 790.0,1043.7 791.7,1048.3Z" fill="url(#lip)"/>
<path d="M640.6,1048.3C641.0,1043.7 642.2,1029.3 643.0,1021.0C643.9,1012.8 643.6,1005.1 645.5,998.7C647.4,992.3 648.8,987.0 654.2,982.6C659.5,978.3 667.6,974.1 677.7,972.7C687.8,971.3 702.7,971.1 714.9,974.4C727.0,977.7 740.3,984.8 750.8,992.5C761.3,1000.3 772.0,1011.7 778.0,1021.0C784.0,1030.3 785.3,1043.7 786.7,1048.3Z" fill="url(#ind)"/>
<path d="M625.7,1021.0C626.5,1015.6 626.9,997.1 630.6,988.8C634.4,980.6 640.1,975.4 648.0,971.5C655.8,967.5 666.6,965.5 677.7,965.3C688.9,965.1 702.5,966.3 714.9,970.2C727.3,974.2 740.9,980.3 752.0,988.8C763.2,997.3 776.8,1015.6 781.7,1021.0" fill="none" stroke="#4aa0f8" stroke-width="1.1" opacity="0.8"/>
<path d="M1425.0,795.0C1427.2,796.8 1434.7,802.5 1438.0,806.0C1441.3,809.5 1442.4,812.3 1445.0,816.0C1447.6,819.7 1449.9,823.4 1453.4,828.0C1457.0,832.6 1462.9,837.7 1466.3,843.5C1469.7,849.3 1472.3,856.9 1474.0,863.0C1475.7,869.1 1477.0,873.3 1476.7,880.0C1476.4,886.7 1474.0,896.3 1472.0,903.0C1470.0,909.7 1466.3,916.0 1465.0,920.0C1463.7,924.0 1463.0,925.0 1464.0,927.0C1465.0,929.0 1467.0,929.5 1471.0,932.0C1475.0,934.5 1483.0,936.7 1488.0,942.0C1493.0,947.3 1499.3,954.5 1501.0,964.0C1502.7,973.5 1500.2,989.5 1498.0,999.0C1495.8,1008.5 1491.0,1012.5 1488.0,1021.0C1485.0,1029.5 1481.3,1045.2 1480.0,1050.0L1570,1060L1570,780L1425,780Z" fill="url(#tr)"/>
<path d="M1505,930 C1525,950 1540,985 1515,1030 L1570,1030 L1570,930Z" fill="url(#trs)"/>
<path d="M1510.7,1024.7 L1560,994.9 L1560,1060 L1440,1060 Z" fill="#c2d6ea"/>
<path d="M1425.0,795.0C1427.2,796.8 1434.7,802.5 1438.0,806.0C1441.3,809.5 1442.4,812.3 1445.0,816.0C1447.6,819.7 1449.9,823.4 1453.4,828.0C1457.0,832.6 1462.9,837.7 1466.3,843.5C1469.7,849.3 1472.3,856.9 1474.0,863.0C1475.7,869.1 1476.2,877.2 1476.7,880.0L1425,880Z" fill="url(#tl)" opacity="1"/>
<path d="M1425.0,594.0C1428.3,594.5 1434.8,595.2 1445.0,597.0C1455.2,598.8 1474.8,601.8 1486.0,605.0C1497.2,608.2 1504.0,612.0 1512.0,616.0C1520.0,620.0 1525.2,623.3 1534.0,629.0C1542.8,634.7 1559.8,646.5 1565.0,650.0L1565.0,842.0L1533.0,819.0L1485.7,798.2L1445.3,793.0L1425.0,791.0Z" fill="url(#r1)"/>
<path d="M1425.0,594.0C1428.3,594.5 1434.8,595.2 1445.0,597.0C1455.2,598.8 1474.8,601.8 1486.0,605.0C1497.2,608.2 1504.0,612.0 1512.0,616.0C1520.0,620.0 1525.2,623.3 1534.0,629.0C1542.8,634.7 1559.8,646.5 1565.0,650.0" fill="none" stroke="#e4f0fc" stroke-width="1" opacity="0.75"/>
<path d="M1440.0,630.0C1445.0,629.3 1460.0,626.5 1470.0,626.0C1480.0,625.5 1488.3,625.7 1500.0,627.0C1511.7,628.3 1533.3,632.8 1540.0,634.0" fill="none" stroke="#2c6ad8" stroke-width="2.5" opacity="0.7"/>
<path d="M1440.0,646.0C1445.8,644.7 1464.2,639.5 1475.0,638.0C1485.8,636.5 1494.2,636.5 1505.0,637.0C1515.8,637.5 1534.2,640.3 1540.0,641.0" fill="none" stroke="#3070dc" stroke-width="2" opacity="0.7"/>
<path d="M1425.0,745.0C1428.4,746.5 1435.2,749.2 1445.3,754.2C1455.4,759.2 1471.1,764.4 1485.7,775.0C1500.3,785.6 1519.8,804.8 1533.0,817.6C1546.2,830.4 1559.7,846.3 1565.0,852.0L1565.0,842.0L1533.0,819.0L1485.7,798.2L1445.3,793.0L1425.0,791.0Z" fill="url(#r2)"/>
<path d="M1425.0,789.5C1428.4,789.8 1435.2,790.3 1445.3,791.5C1455.4,792.7 1471.1,792.4 1485.7,796.7C1500.3,801.0 1519.8,810.2 1533.0,817.5C1546.2,824.8 1559.7,836.7 1565.0,840.5" fill="none" stroke="#2a6ae2" stroke-width="3" opacity="0.9"/></svg><!--WALL-END-->
<div id="win">
<div class="abs" style="left:0;top:-.600px;width:1295px;height:706px"><!--WIN-START-->
<!-- title bar -->
<svg class="abs" style="left:21px;top:24px" width="18" height="16" viewBox="0 0 18 16"><path d="M15.6 8H2.4M8.6 1.6L2.2 8l6.4 6.4" fill="none" stroke="#1b1b1b" stroke-width="1.25" stroke-linecap="round" stroke-linejoin="round"/></svg>
<span class="t" style="left:63px;top:24px;font-size:15px;letter-spacing:-.02px">Settings</span>
<svg class="abs" style="left:1145px;top:13px" width="14" height="14" viewBox="0 0 14 14"><path d="M1 7.5h12" stroke="#1b1b1b" stroke-width="1.2" fill="none"/></svg>
<svg class="abs" style="left:1202px;top:13px" width="14" height="14" viewBox="0 0 14 14"><rect x="1.6" y="1.6" width="10.8" height="10.8" rx="1.6" stroke="#1b1b1b" stroke-width="1.2" fill="none"/></svg>
<svg class="abs" style="left:1259px;top:13px" width="14" height="14" viewBox="0 0 14 14"><path d="M1.2 1.2l11.6 11.6M12.8 1.2L1.200 12.8" stroke="#1b1b1b" stroke-width="1.2" fill="none" stroke-linecap="round"/></svg>

<!-- account -->
<div class="abs" style="left:20px;top:71px;width:75px;height:75px;border-radius:50%;background:#e9e9e9"></div>
<svg class="abs" style="left:37.500px;top:88px" width="40" height="42" viewBox="0 0 40 42"><circle cx="20" cy="13.6" r="10.7" fill="none" stroke="#3b3b3b" stroke-width="2.6"/><path d="M4.3 39.5c0-9.4 6.6-14 15.700-14s15.700 4.600 15.700 14" fill="none" stroke="#3b3b3b" stroke-width="2.6"/></svg>
<span class="t" style="left:110px;top:92px;font-size:17.5px;font-weight:700;letter-spacing:-.5px;color:#111">tashreef shareef</span>

<!-- search -->
<div class="abs" style="left:20.500px;top:178.500px;width:349px;height:40px;border-radius:5px;background:#fcfcfc;border:1px solid #e4e4e4;border-bottom:1.500px solid #8a8a8a"></div>
<span class="t" style="left:35px;top:191px;font-size:17.5px;letter-spacing:-.15px;color:#5f5f5f">Find a setting</span>
<svg class="abs" style="left:338px;top:190px" width="16" height="16" viewBox="0 0 16 16"><circle cx="6.700" cy="6.700" r="4.700" fill="none" stroke="#2b2b2b" stroke-width="1.2"/><path d="M10.200 10.200l4.200 4.200" stroke="#2b2b2b" stroke-width="1.300" stroke-linecap="round"/></svg>

<!-- nav -->
<div class="abs" style="left:20px;top:297px;width:350px;height:45px;border-radius:6px;background:#eaeaea"></div>
<div class="abs" style="left:20.500px;top:310px;width:3px;height:20px;border-radius:2px;background:#0560c4"></div>
<span class="t" style="left:75px;top:263px;font-size:17.5px;letter-spacing:.08px">Home</span>
<span class="t" style="left:75px;top:313px;font-size:17.5px;letter-spacing:-.56px">System</span>
<span class="t" style="left:75px;top:363px;font-size:17.5px;letter-spacing:.07px">Bluetooth &amp; devices</span>
<span class="t" style="left:75px;top:413px;font-size:17.5px;letter-spacing:.33px">Network &amp; internet</span>
<span class="t" style="left:75px;top:463px;font-size:17.5px;letter-spacing:-.24px">Personalization</span>
<!--ICONS-START--><!-- nav icons -->
<svg class="abs" style="left:31px;top:257px" width="28" height="26" viewBox="0 0 28 26"><defs><linearGradient id="hb" x1="0" y1="0" x2="0" y2="1"><stop offset="0" stop-color="#dedede"/><stop offset="1" stop-color="#a6a6a6"/></linearGradient><linearGradient id="hr" x1="0" y1="0" x2="1" y2="1"><stop offset="0" stop-color="#f58a12"/><stop offset="1" stop-color="#d65400"/></linearGradient></defs><path d="M3 12.500L14 3.500l11 9V23a1.600 1.600 0 0 1-1.600 1.600H18.200V15.300H9.800v9.300H4.600A1.600 1.600 0 0 1 3 23z" fill="url(#hb)"/><path d="M2.700 12.800L14 2.600l11.300 10.200" fill="none" stroke="url(#hr)" stroke-width="3" stroke-linecap="round" stroke-linejoin="round"/></svg>
<svg class="abs" style="left:33px;top:309px" width="26" height="22" viewBox="0 0 26 22"><defs><linearGradient id="sy" x1="0" y1="0" x2="1" y2="1"><stop offset="0" stop-color="#3adbe8"/><stop offset="1" stop-color="#0e7bd6"/></linearGradient></defs><rect x="1" y="1" width="23" height="19" rx="2" fill="url(#sy)"/><path d="M1 16.800h23v1.200a2 2 0 0 1-2 2H3a2 2 0 0 1-2-2z" fill="#0b4a7a"/><circle cx="18.200" cy="18.400" r=".55" fill="#bfe6ff"/><circle cx="20.400" cy="18.400" r=".55" fill="#bfe6ff"/></svg>
<svg class="abs" style="left:35px;top:356px" width="21" height="28" viewBox="0 0 21 28"><path d="M10.500 .8c6.200 0 9.500 3.800 9.500 13.100S16.700 27 10.500 27 1 23.200 1 13.900 4.300.8 10.500.8z" fill="#0a84f5"/><path d="M5.700 9.300l9.200 8.400-4.500 4.200V5.600l4.500 4.200-9.200 8.400" fill="none" stroke="#fff" stroke-width="1.500" stroke-linejoin="round" stroke-linecap="round"/></svg>
<svg class="abs" style="left:32px;top:410px" width="28" height="20" viewBox="0 0 28 20"><path d="M13.400 18.800L1 6.500C8 -.600 19.500-.600 26 6.500z" fill="#3cc4f2"/><path d="M13.400 18.800L4.700 10.200c5-5 12.700-5 17.500 0z" fill="#1b8fdc"/><path d="M13.400 18.800L8.300 13.800c2.900-2.900 7.400-2.900 10.300 0z" fill="#0c5aae"/></svg>
<svg class="abs" style="left:31px;top:455px" width="28" height="28" viewBox="0 0 28 28"><defs><linearGradient id="bh" x1="1" y1="0" x2="0" y2="1"><stop offset="0" stop-color="#6b747d"/><stop offset="1" stop-color="#a0a9b2"/></linearGradient><linearGradient id="bt" x1="0" y1="0" x2="1" y2="1"><stop offset="0" stop-color="#fba21a"/><stop offset="1" stop-color="#e0560c"/></linearGradient></defs><path d="M25.800 2.800L12.200 18.600" stroke="url(#bh)" stroke-width="3.600" stroke-linecap="round"/><path d="M9.300 16.200c2.600-1.200 5.600 1.300 4.900 4.300-.8 3.600-5.300 5.700-11.800 5.400 2.300-1.400 2.700-2.800 3.200-5.200.4-2.100 1.700-3.600 3.700-4.500z" fill="url(#bt)"/></svg>
<!--ICONS-END-->

<!-- heading -->
<span class="t" style="left:406px;top:78px;font-size:35px;letter-spacing:-.62px;color:#5c5c5c;-webkit-text-stroke:.9px #5c5c5c">System</span>
<svg class="abs" style="left:542px;top:87.500px" width="12" height="16" viewBox="0 0 12 16"><path d="M3 2.500L8.500 8 3 13.500" fill="none" stroke="#5c5c5c" stroke-width="1.700" stroke-linecap="round" stroke-linejoin="round"/></svg>
<span class="t" style="left:571px;top:78px;font-size:35px;letter-spacing:.1px;color:#1a1a1a;-webkit-text-stroke:.9px #1a1a1a">Display</span>
<span class="t" style="left:408px;top:145px;font-size:17.5px;letter-spacing:-.05px;color:#5f5f5f">Select a display to change the settings for it. Drag displays to rearrange them.</span>

<!-- arrange panel -->
<div class="abs" style="left:408px;top:173px;width:858px;height:384px;border-radius:5px;background:#f2f2f2;border:1px solid #cdcdcd;border-bottom-color:#c2c2c2"></div>
<div class="abs" style="left:494.500px;top:233.500px;width:340.500px;height:192.500px;border-radius:5.500px;background:#0078d4;border:1px solid #3a4f63"></div>
<div class="abs" style="left:836px;top:233.500px;width:340px;height:192.500px;border-radius:5.500px;background:#dadada"></div>
<div class="abs" style="left:494px;top:300px;width:341px;height:43.600px;overflow:hidden"><span class="t" style="left:2.500px;top:13px;width:341px;text-align:center;font-size:40px;color:#fff">1</span></div>
<span class="t" style="left:837px;top:314px;width:340px;text-align:center;font-size:35px;color:#111">2</span>
<div class="abs" style="left:822px;top:496px;width:163px;height:40px;border-radius:5px;background:#f6f6f6;border:1px solid #e3e3e3;border-bottom-color:#d0d0d0"></div>
<span class="t" style="left:822px;top:509px;width:163px;text-align:center;font-size:17.5px;letter-spacing:.2px">Identify</span>
<div class="abs" style="left:1010px;top:496px;width:228px;height:40px;border-radius:5px;background:#fbfbfb;border:1px solid #e3e3e3;border-bottom-color:#d0d0d0"></div>
<span class="t" style="left:1026px;top:509px;font-size:17.5px;letter-spacing:-.3px">Extend these displays</span>
<svg class="abs" style="left:1205px;top:510px" width="14" height="12" viewBox="0 0 14 12"><path d="M2.500 3.500L7 8l4.500-4.500" fill="none" stroke="#444" stroke-width="1.200" stroke-linecap="round" stroke-linejoin="round"/></svg>

<!-- multiple displays card -->
<div class="abs" style="left:408px;top:561px;width:858px;height:160px;border-radius:5px;background:#fbfbfb;border:1px solid #e8e8e8"></div>
<div class="abs" style="left:409px;top:646px;width:856px;height:1px;background:#e6e6e6"></div>
<svg class="abs" style="left:431px;top:594.500px" width="28" height="24" viewBox="0 0 28 24"><rect x="7.700" y="1.700" width="17.600" height="12.600" rx="3.200" fill="none" stroke="#1b1b1b" stroke-width="1.400"/><rect x="2.700" y="5.700" width="15.600" height="11.600" rx="3" fill="#fbfbfb" stroke="#1b1b1b" stroke-width="1.400"/><path d="M1.500 20.800h18" stroke="#1b1b1b" stroke-width="1.400" stroke-linecap="round"/></svg>
<span class="t" style="left:483px;top:589.500px;font-size:17.5px;letter-spacing:.04px">Multiple displays</span>
<span class="t" style="left:482.500px;top:610.500px;font-size:15px;letter-spacing:.14px;color:#5f5f5f">Choose the presentation mode for your displays</span>
<svg class="abs" style="left:1226px;top:597px" width="18" height="12" viewBox="0 0 18 12"><path d="M2.500 9.500L9 3l6.500 6.500" fill="none" stroke="#333" stroke-width="1.300" stroke-linecap="round" stroke-linejoin="round"/></svg>
<div class="abs" style="left:482px;top:666px;width:25px;height:25px;border-radius:5px;background:#f5f5f5;border:1.300px solid #858585"></div>
<span class="t" style="left:517.500px;top:670px;font-size:17.5px;letter-spacing:-.01px">Make this my main display</span>

<!-- scrollbar -->
<div class="abs" style="left:1290px;top:152px;width:2.500px;height:127px;border-radius:2px;background:#959595"></div>
<!--WIN-END--></div>
</div>
<div id="task">
<!--TASK-START--><div class="abs" style="left:293.500px;top:5.500px;width:49px;height:49px;border-radius:6px;background:#f6f6f6;border:1px solid #e2e2e2"></div>
<!-- start -->
<svg class="abs" style="left:27px;top:16px" width="29" height="29" viewBox="0 0 29 29"><defs><linearGradient id="wl" x1="0" y1="0" x2="1" y2="1"><stop offset="0" stop-color="#4fcdfb"/><stop offset=".5" stop-color="#1f9ae8"/><stop offset="1" stop-color="#0a6ad4"/></linearGradient></defs><path d="M1.500 0H13.700V13.700H0V1.500A1.500 1.500 0 0 1 1.500 0zM15.300 0H27.500A1.500 1.500 0 0 1 29 1.500V13.700H15.300zM0 15.300H13.700V29H1.500A1.500 1.500 0 0 1 0 27.500zM15.300 15.300H29V27.500A1.500 1.500 0 0 1 27.500 29H15.300z" fill="url(#wl)"/></svg>
<!-- search -->
<svg class="abs" style="left:83px;top:14px" width="30" height="32" viewBox="0 0 30 32"><circle cx="13.200" cy="14" r="10" fill="none" stroke="#1f1f1f" stroke-width="3"/><path d="M20.400 21.200l7 7.300" stroke="#1f1f1f" stroke-width="3.200" stroke-linecap="round"/></svg>
<!-- copilot -->
<svg class="abs" style="left:138px;top:15.500px" width="31" height="31" viewBox="0 0 31 31"><defs><linearGradient id="c1" x1="0" y1="0" x2="0" y2="1"><stop offset="0" stop-color="#1b8fe0"/><stop offset=".35" stop-color="#27b7a4"/><stop offset=".7" stop-color="#9fd23c"/><stop offset="1" stop-color="#f5c518"/></linearGradient><linearGradient id="c2" x1="0" y1="0" x2="1" y2="1"><stop offset="0" stop-color="#9a5cf0"/><stop offset=".6" stop-color="#e6509a"/><stop offset="1" stop-color="#f7973c"/></linearGradient></defs><path d="M11 1.500h8.500c1.800 0 3.100 1.100 3.600 2.800l1 3.700H17c-1.600 0-2.700.9-3.200 2.500l-2.600 9.200c-.6 2-2 3-3.900 3H4.200c-2.200 0-3.500-1.900-2.900-4.100L4.800 6c.8-2.700 3.200-4.500 6.200-4.500z" fill="url(#c1)"/><path d="M17.500 1.500h2c1.800 0 3.100 1.100 3.600 2.800l1 3.700h-5.200z" fill="#1a56c8"/><path d="M20 8h5.800c2.200 0 3.500 1.900 2.900 4.100l-2.300 7.600c-.8 2.700-3.200 4.500-6.200 4.500h-8.500l3.400-2.400z" fill="url(#c2)"/><rect x="7.500" y="19.200" width="22.300" height="9.800" rx="2.200" fill="#f7ba00"/><text x="18.700" y="27.300" text-anchor="middle" font-family="Liberation Sans, DejaVu Sans, sans-serif" font-weight="700" font-size="8.600" letter-spacing=".5" fill="#1a1200">PRE</text></svg>
<!-- task view -->
<div class="abs" style="left:193px;top:24px;width:22.500px;height:20px;border-radius:2.500px;background:linear-gradient(#2a2a2a,#151515)"></div>
<div class="abs" style="left:201px;top:16px;width:21.500px;height:19.500px;border-radius:1.500px;background:rgba(232,232,232,.78);border:1px solid rgba(245,245,245,.9)"></div>
<!-- remote desktop -->
<svg class="abs" style="left:249px;top:14px" width="29" height="29" viewBox="0 0 29 29"><path d="M1.500 3.200l5.700-1.200v12.600l-5.700 1z" fill="#9ea3a8"/><path d="M7.200 2l2 .9v11l-2 .7z" fill="#6d7378"/><path d="M2.300 5l4-.8v1.100l-4 .8zM2.300 7.200l4-.8v1.100l-4 .8zM2.300 9.400l4-.7v1.100l-4 .7z" fill="#4a4f54"/><circle cx="2.900" cy="3.900" r=".6" fill="#4de04d"/><path d="M8.600 2.300l17.700 5.300v11.600L8.600 16.100z" fill="#e9edf0"/><path d="M9.600 3.700l15.800 4.700v9.500L9.600 15z" fill="#3d9fe8"/><path d="M9.600 3.700l15.800 4.700v2L9.600 9.600z" fill="#66b9f2" opacity=".6"/><path d="M13.500 17.500l8.500 1.600v1.300l-8.500-1.400z" fill="#cfd5da"/><path d="M1.800 19.300c3-1.300 6-1.300 8.300-.2l9.600 4.100c1.200.6 1.500 2.200.5 3-1 .8-2.300.6-3.400.1L6.200 22.800c-1.600.3-3.200.1-4.400-.5-1-.7-1-2.300 0-3z" fill="#3fc04a"/><path d="M9 19l3-1.700 2.800 1.200-2.600 1.900z" fill="#57d35f"/><path d="M17.800 23.200c.9-.6 2.200-.5 2.900.3.600.8.400 2-.5 2.600-.9.600-2.100.5-2.800-.3-.7-.8-.5-2 .4-2.600z" fill="#d9dde0"/></svg>
<div class="abs" style="left:259px;top:50px;width:8px;height:3.800px;border-radius:2px;background:#8b8b8b"></div>
<!-- settings gear -->
<svg class="abs" style="left:301.500px;top:13.500px" width="33" height="33" viewBox="-16.500 -16.500 33 33"><defs><linearGradient id="gg" x1="0" y1="0" x2="1" y2="1"><stop offset="0" stop-color="#737f8e"/><stop offset="1" stop-color="#535f6e"/></linearGradient><linearGradient id="gb" x1="0" y1="0" x2="1" y2="1"><stop offset="0" stop-color="#1468cc"/><stop offset="1" stop-color="#084a9e"/></linearGradient></defs><g fill="url(#gg)"><circle r="11"/><path transform="rotate(0)" d="M-3.300-14.500h6.600l1.500 5.600h-9.600z"/><path transform="rotate(60)" d="M-3.300-14.500h6.600l1.500 5.600h-9.600z"/><path transform="rotate(120)" d="M-3.300-14.500h6.600l1.500 5.600h-9.600z"/><path transform="rotate(180)" d="M-3.300-14.500h6.600l1.500 5.600h-9.600z"/><path transform="rotate(240)" d="M-3.300-14.500h6.600l1.500 5.600h-9.600z"/><path transform="rotate(300)" d="M-3.300-14.500h6.600l1.500 5.600h-9.600z"/></g><circle r="6.200" fill="#f4f6f8"/><circle r="4.700" fill="url(#gb)"/></svg>
<div class="abs" style="left:308px;top:50px;width:20px;height:3.800px;border-radius:2px;background:#0a6cd6"></div>
<!--TASK-END-->
</div>
<div id="ident"><div style="position:absolute;left:0;top:0;width:373px;height:256px;overflow:hidden"><span style="top:100px;left:5.500px;font-size:200px">1</span></div></div>
<div id="frame"></div>
</body>
</html>
